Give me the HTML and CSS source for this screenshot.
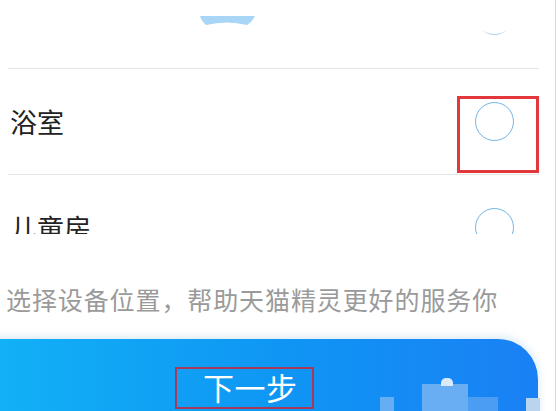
FILE: index.html
```html
<!DOCTYPE html>
<html lang="zh-CN">
<head>
  <meta charset="UTF-8">
  <meta name="viewport" content="width=device-width, initial-scale=1.0">
  <title>选择设备位置</title>
  <link rel="stylesheet" href="styles.css">
</head>
<body>
  <div class="screen">
    <div class="list">
      <div class="row">
        <span class="label">卧室</span>
        <span class="radio"></span>
      </div>
      <div class="row">
        <span class="label">浴室</span>
        <span class="radio"></span>
      </div>
      <div class="row">
        <span class="label">儿童房</span>
        <span class="radio"></span>
      </div>
    </div>

    <p class="hint">选择设备位置，帮助天猫精灵更好的服务你</p>

    <div class="next">
      <span class="next-text">下一步</span>
    </div>

    <!-- white fade over the top of the picker -->
    <div class="fade"></div>

    <svg class="bubble" width="60" height="14" viewBox="0 0 60 14">
      <path d="M2 0 L57 0 Q54 6 49 9 Q29 4 8 9 Q4 6 2 0 Z" fill="#a9d5f6"/>
    </svg>

    <!-- annotation box drawn over the second radio -->
    <div class="mark"></div>

    <!-- pixelated watermark -->
    <div class="mosaic m1"></div>
    <div class="mosaic m2"></div>
    <div class="mosaic m3"></div>
    <div class="mosaic m4"></div>
    <div class="mosaic m5"></div>
  </div>
</body>
</html>
```

FILE: styles.css
```css
* {
  margin: 0;
  padding: 0;
  box-sizing: border-box;
}

body {
  width: 559px;
  height: 411px;
  overflow: hidden;
  background: #fff;
  font-family: "Noto Sans CJK SC", "Noto Sans", sans-serif;
  color: #222;
}

.screen {
  position: relative;
  width: 556px;
  height: 411px;
  border-right: 1px solid #d6d6d6;
  overflow: hidden;
  display: flex;
  flex-direction: column;
}

.screen > * {
  flex-shrink: 0;
}

.bubble {
  position: absolute;
  left: 198px;
  top: 16px;
}

.fade {
  position: absolute;
  left: 0;
  top: 0;
  width: 100%;
  height: 37px;
  background: linear-gradient(to bottom, #fff 0, #fff 30px, rgba(255, 255, 255, 0) 37px);
}

/* picker list, cut at the bottom */
.list {
  height: 234px;
  overflow: hidden;
}

.row {
  height: 106px;
  margin: 0 16px 0 8px;
  padding: 0 25px 0 2px;
  border-bottom: 1px solid #e6e6e6;
  display: flex;
  align-items: center;
  justify-content: space-between;
}

.row:first-child {
  margin-top: -37px;
}

.row:first-child .label {
  visibility: hidden;
}

.label {
  font-size: 27px;
  line-height: 32px;
}

.radio {
  width: 39px;
  height: 39px;
  border: 1.6px solid #72b6e4;
  border-radius: 50%;
}

.hint {
  margin: 50px 0 0 6px;
  font-size: 25px;
  line-height: 30px;
  letter-spacing: 0.9px;
  color: #9a9a9a;
}

.next {
  margin: 25px 0 0 -40px;
  width: 578px;
  height: 110px;
  border-radius: 40px 40px 0 0;
  background: linear-gradient(to right, #12b4f6, #0f96f4 55%, #1a80f4);
  box-shadow: 0 -2px 10px rgba(40, 120, 200, 0.18);
  padding: 28px 0 0 215px;
}

.next-text {
  display: inline-block;
  height: 42px;
  padding: 0 14px 0 26px;
  border: 2px solid #a63a58;
  font-size: 31px;
  line-height: 36px;
  letter-spacing: 0.5px;
  color: #fff;
}

.mark {
  position: absolute;
  left: 457px;
  top: 96px;
  width: 82px;
  height: 77px;
  border: 3px solid #e2383d;
}

.mosaic {
  position: absolute;
  background: #5fa9f2;
}

.m1 { left: 422px; top: 384px; width: 46px; height: 27px; background: #69adf3; }
.m2 { left: 441px; top: 378px; width: 12px; height: 8px; background: #dbe9fa; border-radius: 5px 5px 0 0; }
.m3 { left: 468px; top: 397px; width: 30px; height: 14px; background: #4a9df2; }
.m4 { left: 380px; top: 397px; width: 14px; height: 14px; background: #66aef3; }
.m5 { left: 526px; top: 398px; width: 14px; height: 13px; background: #b9d4ee; }
```
